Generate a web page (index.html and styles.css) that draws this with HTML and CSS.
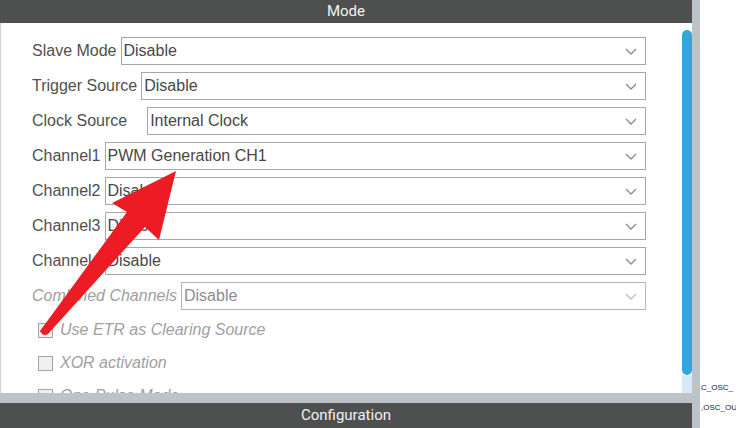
FILE: index.html
```html
<!DOCTYPE html>
<html>
<head>
<meta charset="utf-8">
<link rel="stylesheet" href="styles.css">
</head>
<body>
<div class="app">
  <div class="panel">
    <div class="head">Mode</div>
    <div class="body">
      <div class="content">
        <div class="row"><span class="lbl">Slave Mode</span><div class="sel"><span>Disable</span><svg class="chev" viewBox="0 0 12 7"><path d="M1 1 L6 6 L11 1"/></svg></div></div>
        <div class="row"><span class="lbl">Trigger Source</span><div class="sel"><span>Disable</span><svg class="chev" viewBox="0 0 12 7"><path d="M1 1 L6 6 L11 1"/></svg></div></div>
        <div class="row"><span class="lbl wide">Clock Source</span><div class="sel"><span>Internal Clock</span><svg class="chev" viewBox="0 0 12 7"><path d="M1 1 L6 6 L11 1"/></svg></div></div>
        <div class="row"><span class="lbl">Channel1</span><div class="sel"><span>PWM Generation CH1</span><svg class="chev" viewBox="0 0 12 7"><path d="M1 1 L6 6 L11 1"/></svg></div></div>
        <div class="row"><span class="lbl">Channel2</span><div class="sel"><span>Disable</span><svg class="chev" viewBox="0 0 12 7"><path d="M1 1 L6 6 L11 1"/></svg></div></div>
        <div class="row"><span class="lbl">Channel3</span><div class="sel"><span>Disable</span><svg class="chev" viewBox="0 0 12 7"><path d="M1 1 L6 6 L11 1"/></svg></div></div>
        <div class="row"><span class="lbl">Channel4</span><div class="sel"><span>Disable</span><svg class="chev" viewBox="0 0 12 7"><path d="M1 1 L6 6 L11 1"/></svg></div></div>
        <div class="row disabled"><span class="lbl">Combined Channels</span><div class="sel"><span>Disable</span><svg class="chev" viewBox="0 0 12 7"><path d="M1 1 L6 6 L11 1"/></svg></div></div>
        <div class="checks">
          <div class="check"><span class="box"></span><span class="clbl">Use ETR as Clearing Source</span></div>
          <div class="check"><span class="box"></span><span class="clbl">XOR activation</span></div>
          <div class="check"><span class="box"></span><span class="clbl">One Pulse Mode</span></div>
        </div>
      </div>
      <div class="scroll"><div class="gapw"></div><div class="thumb"></div><div class="track"></div></div>
    </div>
    <div class="band"></div>
    <div class="foot">Configuration</div>
  </div>
  <div class="side">
    <div class="pin">C_OSC_</div>
    <div class="pin">,OSC_OU</div>
  </div>
</div>
<svg class="arrow" viewBox="0 0 736 428" width="736" height="428">
  <path d="M176,171 L159,240 L145,227 L48,334 Q43,337 40,331 L127,212 L112,203 Z" fill="#ed1c24"/>
</svg>
</body>
</html>
```
FILE: styles.css
```css
html, body {
  margin: 0;
  padding: 0;
}
body {
  width: 736px;
  height: 428px;
  overflow: hidden;
  background: #ffffff;
  font-family: "Liberation Sans", Arial, sans-serif;
  position: relative;
}
.app {
  display: flex;
  height: 428px;
}
.panel {
  width: 700px;
  background: #bcc4c9;
  display: flex;
  flex-direction: column;
}
.head, .foot {
  width: 692px;
  background: #4e5050;
  color: #f2f2f2;
  text-align: center;
  font-family: Roboto, "Liberation Sans", sans-serif;
  font-size: 15px;
}
.head {
  height: 23px;
  line-height: 23px;
}
.foot {
  height: 25px;
  line-height: 24px;
}
.band {
  height: 10px;
}
.body {
  display: flex;
  height: 370px;
  width: 692px;
}
.content {
  width: 682px;
  box-sizing: border-box;
  background: #ffffff;
  border-left: 1px solid #cdd4d8;
  padding: 14px 36px 0 31px;
  overflow: hidden;
}
.row {
  display: flex;
  align-items: center;
  height: 28px;
  margin-bottom: 7px;
}
.lbl {
  font-size: 16px;
  color: #505050;
  white-space: nowrap;
  margin-right: 4px;
}
.lbl.wide {
  margin-right: 20px;
}
.sel {
  flex: 1;
  height: 28px;
  box-sizing: border-box;
  border: 1px solid #a3a7ab;
  display: flex;
  align-items: center;
  justify-content: space-between;
  padding: 0 8px 0 2px;
  font-size: 16px;
  color: #474747;
}
.chev {
  width: 12px;
  height: 7px;
  fill: none;
  stroke: #8a8a8a;
  stroke-width: 1.3;
}
.disabled .lbl {
  font-style: italic;
  color: #a0a0a0;
}
.disabled .sel {
  border-color: #b2b6b9;
  color: #8c8c8c;
}
.disabled .chev {
  stroke: #c0c0c0;
}
.checks {
  display: flex;
  flex-direction: column;
  gap: 13px;
  padding-top: 3px;
  padding-left: 6px;
}
.check {
  display: flex;
  align-items: center;
  height: 20px;
  gap: 7px;
}
.box {
  width: 13px;
  height: 13px;
  border: 1px solid #a3a3a3;
  background: #f0f0f0;
}
.clbl {
  font-size: 16px;
  font-style: italic;
  color: #a0a0a0;
}
.scroll {
  width: 10px;
  display: flex;
  flex-direction: column;
  background: #ffffff;
}
.gapw {
  height: 7px;
}
.thumb {
  height: 345px;
  background: #35a6db;
  border-radius: 5px;
}
.track {
  flex: 1;
  background: #d7e9f6;
}
.side {
  flex: 1;
  padding-top: 383px;
  overflow: hidden;
}
.pin {
  font-size: 8px;
  color: #222;
  height: 20px;
  line-height: 10px;
  white-space: nowrap;
  padding-left: 1px;
}
.arrow {
  position: absolute;
  left: 0;
  top: 0;
  pointer-events: none;
}
```
